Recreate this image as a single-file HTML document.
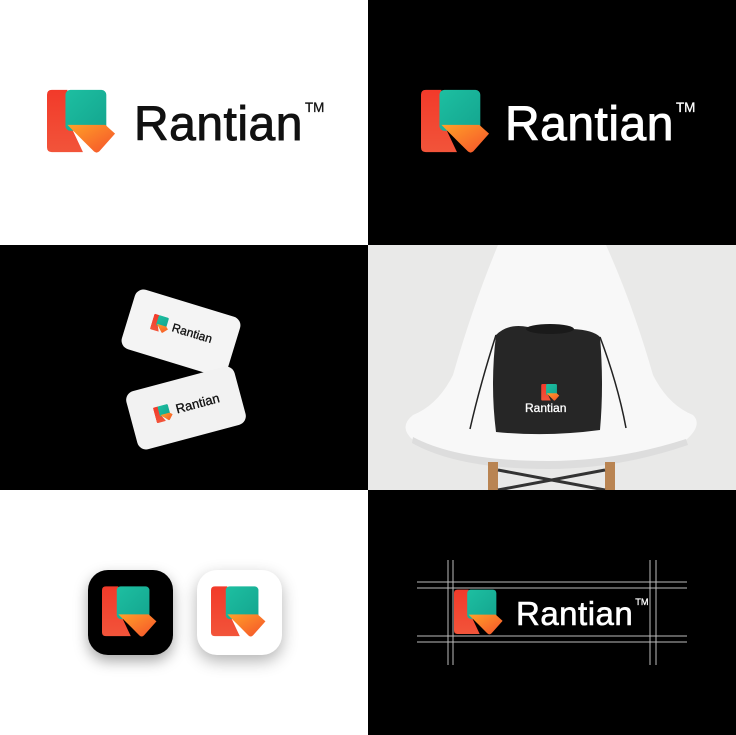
<!DOCTYPE html>
<html><head><meta charset="utf-8"><style>
*{margin:0;padding:0;box-sizing:border-box}
body{width:736px;height:735px;position:relative;overflow:hidden;background:#fff;font-family:"Liberation Sans",sans-serif}
.q{position:absolute;overflow:hidden}
.abs{position:absolute}
.t{position:absolute;font-weight:normal;-webkit-text-stroke:0.9px currentColor;letter-spacing:0.5px;white-space:nowrap}
.tm{font-size:0.28em;vertical-align:top;position:relative;top:0.2em;margin-left:2px;-webkit-text-stroke:0.3px currentColor;letter-spacing:0}
</style></head><body>
<svg width="0" height="0" style="position:absolute">
<defs>
<linearGradient id="gr" x1="0" y1="0" x2="0" y2="1"><stop offset="0" stop-color="#f23a2a"/><stop offset="1" stop-color="#f2543a"/></linearGradient>
<linearGradient id="gt" x1="0" y1="0" x2="1" y2="1"><stop offset="0" stop-color="#1dbfa1"/><stop offset="1" stop-color="#14a58f"/></linearGradient>
<linearGradient id="go" x1="0" y1="0" x2="1" y2="1"><stop offset="0" stop-color="#ffa127"/><stop offset="1" stop-color="#f5512c"/></linearGradient>
<symbol id="logo" viewBox="0 0 72 66">
<path d="M5,0H21V30L37,64H5Q0,64 0,59V5Q0,0 5,0Z" fill="url(#gr)"/>
<rect x="19" y="0" width="42" height="42" rx="5" fill="url(#gt)"/>
<path d="M21,36H60L70,45L54,63Q51,66 48,63L38,53Z" fill="url(#go)"/>
</symbol>
</defs></svg>

<div class="q" style="left:0;top:0;width:368px;height:245px;background:#fff">
<svg class="abs" style="left:47px;top:89px" width="70" height="66"><use href="#logo"/></svg>
<div class="t" style="left:134px;top:97px;font-size:48px;color:#111">Rantian<span class="tm">TM</span></div>
</div>
<div class="q" style="left:368px;top:0;width:368px;height:245px;background:#000">
<svg class="abs" style="left:53px;top:89px" width="70" height="66"><use href="#logo"/></svg>
<div class="t" style="left:137px;top:97px;font-size:48px;color:#fff">Rantian<span class="tm">TM</span></div>
</div>

<div class="q" style="left:0;top:245px;width:368px;height:245px;background:#000">
<div class="abs" style="left:126px;top:57px;width:110px;height:62px;background:#f4f4f4;border-radius:9px;transform:rotate(17deg)">
<svg class="abs" style="left:24px;top:20px" width="18" height="17"><use href="#logo"/></svg>
<div class="t" style="left:45px;top:21px;font-size:12px;color:#111;letter-spacing:0;-webkit-text-stroke:0.3px #111">Rantian</div></div>
<div class="abs" style="left:130px;top:133px;width:112px;height:60px;background:#f2f2f2;border-radius:9px;transform:rotate(-15deg)">
<svg class="abs" style="left:24px;top:21px" width="18" height="17"><use href="#logo"/></svg>
<div class="t" style="left:46px;top:21px;font-size:13px;color:#111;letter-spacing:0;-webkit-text-stroke:0.3px #111">Rantian</div></div>
</div>

<div class="q" style="left:368px;top:245px;width:368px;height:245px;background:#e6e6e6">
<svg class="abs" style="left:0;top:0" width="368" height="245">
<rect x="0" y="0" width="368" height="245" fill="#e9e9e8"/>
<path d="M130,0 H238 Q265,60 285,130 Q300,160 325,170 Q335,180 318,195 Q250,218 180,218 Q90,218 45,195 Q30,182 45,170 Q70,160 85,130 Q105,60 130,0Z" fill="#f8f8f8"/>
<path d="M45,192 Q90,216 180,216 Q250,216 318,194 L320,200 Q250,224 180,224 Q90,224 44,198Z" fill="#ddd"/>
<rect x="120" y="217" width="10" height="28" fill="#b98452"/>
<rect x="237" y="217" width="10" height="28" fill="#b98452"/>
<path d="M130,225 L237,245 M237,225 L130,245" stroke="#333" stroke-width="3"/>
<path d="M128,90 Q140,78 160,82 Q185,78 205,84 Q225,85 232,92 Q236,140 232,185 Q180,192 128,187 Q122,140 128,90Z" fill="#262626"/>
<path d="M128,90 Q112,140 102,184 M232,92 Q250,140 258,183" stroke="#222" stroke-width="1.5" fill="none"/>
<ellipse cx="182" cy="84" rx="24" ry="5" fill="#1a1a1a"/>
</svg>
<svg class="abs" style="left:173px;top:139px" width="19" height="17"><use href="#logo"/></svg>
<div class="t" style="left:157px;top:156px;font-size:12px;color:#fff;letter-spacing:0;-webkit-text-stroke:0.3px #fff">Rantian</div>
</div>

<div class="q" style="left:0;top:490px;width:368px;height:245px;background:#fff">
<div class="abs" style="left:88px;top:80px;width:85px;height:85px;background:#000;border-radius:20px;box-shadow:0 6px 14px rgba(0,0,0,.35)">
<svg class="abs" style="left:14px;top:16px" width="56" height="52"><use href="#logo"/></svg></div>
<div class="abs" style="left:197px;top:80px;width:85px;height:85px;background:#fff;border-radius:20px;box-shadow:0 6px 16px rgba(0,0,0,.3)">
<svg class="abs" style="left:14px;top:16px" width="56" height="52"><use href="#logo"/></svg></div>
</div>

<div class="q" style="left:368px;top:490px;width:368px;height:245px;background:#000">
<svg class="abs" style="left:0;top:0" width="368" height="245">
<g stroke="#bbb" stroke-width="1">
<line x1="49" y1="92" x2="319" y2="92"/><line x1="49" y1="98" x2="319" y2="98"/>
<line x1="49" y1="146" x2="319" y2="146"/><line x1="49" y1="152" x2="319" y2="152"/>
<line x1="80" y1="70" x2="80" y2="175"/><line x1="85" y1="70" x2="85" y2="175"/>
<line x1="282" y1="70" x2="282" y2="175"/><line x1="288" y1="70" x2="288" y2="175"/>
</g></svg>
<svg class="abs" style="left:86px;top:99px" width="50" height="47"><use href="#logo"/></svg>
<div class="t" style="left:148px;top:105px;font-size:33px;color:#fff;-webkit-text-stroke:0.6px #fff">Rantian<span class="tm">TM</span></div>
</div>
</body></html>
